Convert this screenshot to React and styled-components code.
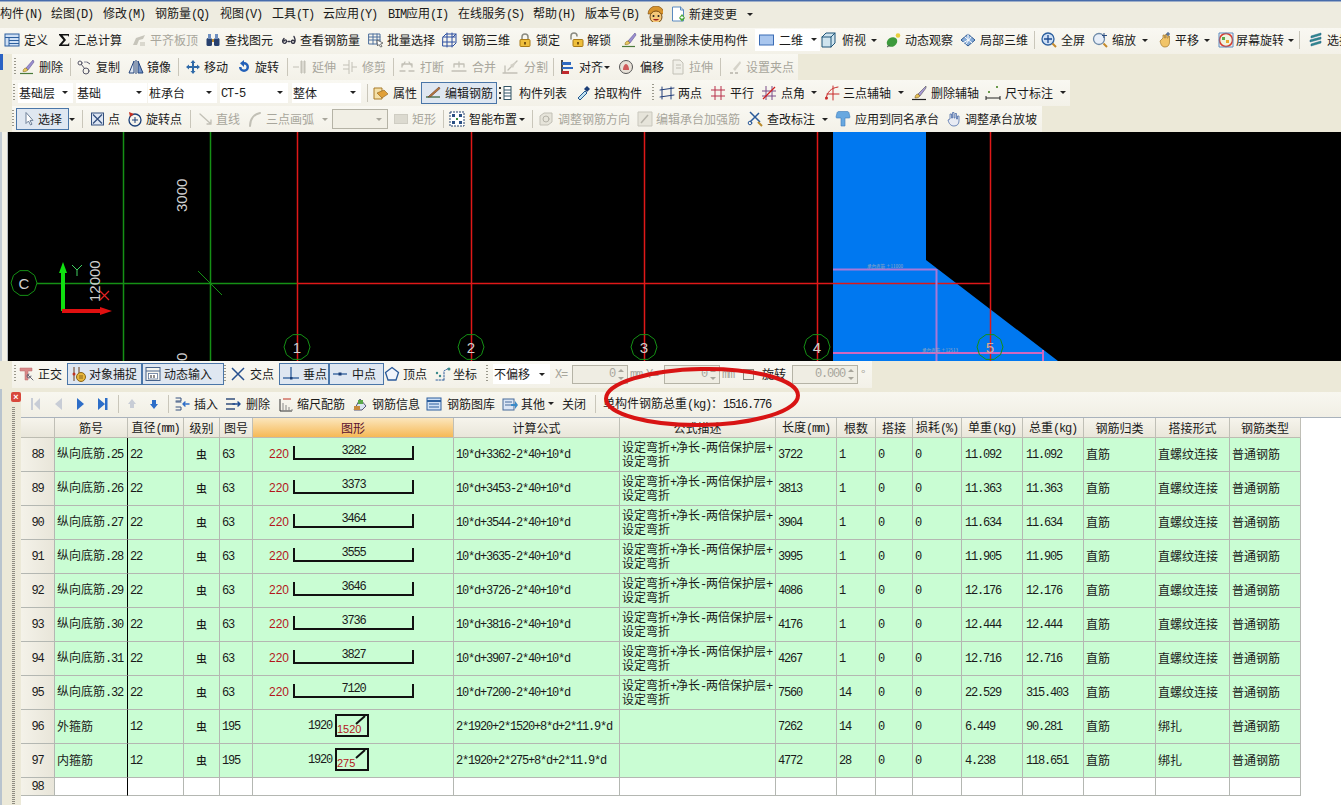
import React from 'react';
import styled, { createGlobalStyle } from 'styled-components';

const Global = createGlobalStyle`
  html, body { margin: 0; padding: 0; background: #ece9d8; overflow: hidden; }
  * { box-sizing: border-box; }
`;

const CJK = '"Noto Sans CJK SC", "Liberation Sans", sans-serif';
const MONO = '"Liberation Mono", "DejaVu Sans Mono", monospace';

const Page = styled.div`
  position: relative; width: 1341px; height: 805px; overflow: hidden;
  display: flex; flex-direction: column; background: #ece9d8;
  font-family: ${CJK}; font-size: 12px; line-height: 14px; color: #1a1a1a;
`;
const TopLine = styled.div`height: 2px; background: linear-gradient(#1c4a9c, #c8cfd8);`;
const MenuBar = styled.div`height: 26px; display: flex; align-items: center; padding-bottom: 2px; background: #eeece0;`;
const ToolRow = styled.div`
  height: 26px; display: flex; align-items: stretch;
`;
const Bar = styled.div`
  display: flex; align-items: center; flex: 0 0 auto; height: 26px;
  margin-left: ${p => p.$left}px; width: ${p => p.$width}px; padding-left: ${p => p.$pad}px;
  padding-bottom: ${p => p.$lift || 0}px;
  background: linear-gradient(#f9f8f2, #f3f1e8);
`;
const SideTab = styled.div`
  flex: 0 0 3px; width: 3px; height: 16px; background: #2a62c4; margin-right: -3px; position: relative;
`;
const Item = styled.div`
  flex: 0 0 ${p => p.$w}px; width: ${p => p.$w}px; height: ${p => (p.$active ? 22 : 18)}px;
  display: flex; align-items: center; white-space: nowrap;
  padding-left: ${p => p.$pad || 0}px; gap: ${p => p.$gap ?? 4}px;
  color: ${p => (p.$dis ? '#a8a69c' : '#1a1a1a')};
  ${p => p.$active && 'background: #dfe7f1; border: 1px solid #4a76a8; margin-right: 0;'}
`;
const Lat = styled.span`font-family: ${MONO}; font-size: 12px; letter-spacing: -1.2px;`;
const Sep = styled.div`
  flex: 0 0 ${p => p.$w}px; height: 18px; display: flex;
  &::before { content: ''; width: 1px; height: 18px; background: #c9c6ba; }
`;
const Grip = styled.div`
  flex: 0 0 ${p => p.$w}px; height: 18px; display: flex;
  &::before { content: ''; width: 2px; height: 18px;
    background-image: linear-gradient(#9a988c 50%, transparent 50%); background-size: 2px 3px; }
`;
const ArrowSlot = styled.div`
  flex: 0 0 ${p => p.$w}px; height: 18px; display: flex; align-items: center;
  &::before { content: ''; border-left: 3px solid transparent; border-right: 3px solid transparent;
    border-top: 3px solid ${p => (p.$dis ? '#a8a69c' : '#222')}; }
`;
const Slot = styled.div`flex: 0 0 ${p => p.$w}px; display: flex; align-items: center;`;
const SelectBox = styled.div`
  width: ${p => p.$w}px; height: 20px; background: #fff; display: flex; align-items: center;
  justify-content: space-between; padding: 0 5px 0 1px; white-space: nowrap; position: relative;
  ${p => p.$frame && 'border: 1px solid #b5b3a6; background: #f1efe5;'}
  &::after { content: ''; border-left: 3px solid transparent; border-right: 3px solid transparent;
    border-top: 3px solid ${p => (p.$frame ? '#a8a69c' : '#222')}; }
`;
const NumBox = styled.div`
  width: ${p => p.$w}px; height: 19px; border: 1px solid #b5b3a6; background: #efede3;
  display: flex; align-items: center; justify-content: flex-end; padding-right: 12px;
  color: #a8a69c; font-family: ${MONO}; font-size: 12px; letter-spacing: -1.2px; position: relative;
  &::before { content: ''; position: absolute; right: 3px; top: 3px; border-left: 3px solid transparent;
    border-right: 3px solid transparent; border-bottom: 3px solid #a8a69c; }
  &::after { content: ''; position: absolute; right: 3px; bottom: 3px; border-left: 3px solid transparent;
    border-right: 3px solid transparent; border-top: 3px solid #a8a69c; }
`;
const CheckBox = styled.div`width: 11px; height: 11px; border: 1px solid #8b8a80; background: #f3f1e8;`;
const WhiteBox = styled.div`
  flex: 0 0 ${p => p.$w}px; height: 22px; background: #fff; display: flex; align-items: center;
  padding-left: 3px; gap: 5px; white-space: nowrap; position: relative;
  &::after { content: ''; position: absolute; right: 3px; top: 9px; border-left: 3px solid transparent;
    border-right: 3px solid transparent; border-top: 3px solid #222; }
`;
const CanvasRow = styled.div`height: 229px; display: flex;`;
const LeftStrip = styled.div`
  flex: 0 0 8px; background: #f3f1e6; border-left: 2px solid #c3ccd4; border-right: 1px solid #b8bcc0;
`;
const Cad = styled.svg`flex: 1; display: block; background: #000;`;
const SnapRow = styled.div`height: 28px; display: flex;`;
const SnapBar = styled(Bar)`height: 27px;`;
const Lower = styled.div`flex: 1; display: flex; min-height: 0;`;
const Rail = styled.div`
  flex: 0 0 21px; display: flex; flex-direction: column; padding: 3px 0 0 10px; gap: 5px;
  border-left: 2px solid #b9c4ce; margin-left: 0; position: relative;
`;
const CloseBtn = styled.div`
  width: 10px; height: 10px; background: #d8483c; border-radius: 2px; color: #fff; margin-left: -1px;
  font: bold 9px/10px "Liberation Sans", sans-serif; text-align: center;
`;
const Dots = styled.div`
  flex: 1; width: 3px; margin-left: 0;
  background-image: linear-gradient(#8f8d82 50%, transparent 50%); background-size: 3px 2px;
`;
const Main = styled.div`flex: 1; display: flex; flex-direction: column; padding-top: 3px; min-width: 0; background: linear-gradient(#ece9d8 3px, #fff 3px);`;
const RebarBar = styled.div`
  height: 26px; flex: 0 0 26px; display: flex; align-items: center; padding-left: ${p => p.$pad}px; padding-bottom: 2px;
  background: linear-gradient(#f8f7f0, #f1efe5); border-bottom: 1px solid #a9b2bc;
`;
const Grid = styled.table`
  border-collapse: separate; border-spacing: 0; table-layout: fixed; width: 1280px; background: #fff;
`;
const Th = styled.th`
  height: 20px; padding: 0; font-weight: 400; font-size: 12px; text-align: center; white-space: nowrap;
  border-right: 1px solid #c0bfb6; border-bottom: 1px solid #bdbcb2;
  background: ${p => (p.$hot ? 'linear-gradient(#fbe6bd, #f6b956)' : 'linear-gradient(#f6f4ec, #e9e6da)')};
  color: ${p => (p.$hot ? '#5a1030' : '#1a1a1a')};
`;
const Td = styled.td`
  padding: 0 0 1px ${p => p.$pl ?? 2}px; height: ${p => (p.$blank ? 18 : 34)}px; font-size: 12px; line-height: 12px;
  white-space: nowrap; overflow: hidden; text-align: ${p => (p.$center ? 'center' : 'left')};
  background: ${p => (p.$blank ? '#fff' : '#c9fdd3')};
  border-right: 1px solid ${p => (p.$freeze ? '#000' : '#b4b7b2')};
  border-bottom: 1px solid #b4b7b2;
`;
const RowHead = styled(Td)`
  background: linear-gradient(90deg, #f4f2e9, #e8e5d9); padding: 0 0 1px; text-align: center;
`;
const GradeMark = styled.span`font-size: 11px; font-weight: 500;`;
const Shape = styled.div`display: flex; align-items: center; padding-left: ${p => p.$pl}px;`;
const RedLen = styled(Lat)`color: #b3161c; width: 24px; flex: 0 0 24px; font-family: "Liberation Sans", sans-serif; letter-spacing: 0;`;
const Bracket = styled.div`
  width: 121px; height: 14px; margin-bottom: 3px; border: 2px solid #111; border-top: 0;
  text-align: center; font-family: ${MONO}; font-size: 12px; letter-spacing: -1.2px; line-height: 11px;
`;
const Len = styled(Lat)`width: 27px; flex: 0 0 27px;`;
const Stirrup = styled.div`
  position: relative; width: 34px; height: 23px; border: 2px solid #111; color: #b3161c;
  font-family: "Liberation Sans", sans-serif; font-size: 11px; line-height: 10px; padding: 8px 0 0 0; margin-top: -1px;
`;
const Hook = styled.svg`position: absolute; right: -2px; top: -2px;`;
const Ellipse = styled.svg`position: absolute; left: 596px; top: 362px; pointer-events: none;`;

const S = { fill: 'none', strokeLinecap: 'round', strokeLinejoin: 'round' };
const ICONS = {
  def: <><rect x="1" y="2" width="14" height="12" fill="#cfe0f5" stroke="#2c5f9e" /><path d="M1 5.5h14M5 5.5V14M5 8.5h10M5 11.5h10" stroke="#2c5f9e" /></>,
  sigma: <path d="M3 2h10v3l-1-1.5H6.5L10 8l-4 4.5h6l1.2-2V14H3v-1l4.4-5L3 3z" fill="#111" />,
  alignG: <><path d="M2 13l3-7 9-3-2 4-4 1-2 5z" fill="#c7c5bb" /><path d="M9 10h5v4H9z" fill="#dad8ce" /></>,
  binoc: <><rect x="1.5" y="6" width="5.5" height="8" rx="1.5" fill="#27406e" /><rect x="9" y="6" width="5.5" height="8" rx="1.5" fill="#27406e" /><rect x="3" y="2" width="3" height="5" fill="#6e8fc0" /><rect x="10" y="2" width="3" height="5" fill="#6e8fc0" /><path d="M7 7h2v3H7z" fill="#b9882e" /></>,
  glasses: <path d="M3 6.5C1.5 8 1 10 2.5 11s3-.5 3-2-2-1.5-2.5 0M13 4.5c1 2 1.5 4.5.5 6s-3 1-3-.7 1.5-2 2.5-1M7 9.5h2" {...S} stroke="#334" strokeWidth="1.4" />,
  batch: <><path d="M1 2h11v10H1zM1 5h11M1 8h11M5 2v10M9 2v10" {...S} stroke="#4d6f9c" /><path d="M9 8l6 3-2.5 1 1.500 2.500-1.500.5-1.500-2.500L9.500 14z" fill="#fff" stroke="#444" strokeWidth=".7" /></>,
  grid3: <path d="M1 5h12M1 10h12M5 1v14M10 1v14M1 5l3-3h10v9l-3 3H1zM14 2l-3 3" {...S} stroke="#2c4fa0" />,
  lock: <><path d="M5 8V5a3 3 0 016 0v3" {...S} stroke="#8b8b80" strokeWidth="1.5" /><rect x="3" y="7.500" width="10" height="7" rx="1" fill="#efbf3c" stroke="#a97a16" /><rect x="7" y="10" width="2" height="2.500" fill="#7a5510" /></>,
  unlock: <><path d="M3 7V4a3 3 0 016 0" {...S} stroke="#8b8b80" strokeWidth="1.5" /><rect x="5" y="7.500" width="10" height="7" rx="1" fill="#efbf3c" stroke="#a97a16" /><rect x="9" y="10" width="2" height="2.500" fill="#7a5510" /></>,
  brush: <><path d="M14 1L7 9l2 2 6-8z" fill="#9b8fd0" stroke="#5e5596" strokeWidth=".6" /><path d="M7 9c-2 0-3 2-3 3.500 2 .5 4-.5 5-1.500z" fill="#e8c860" stroke="#8a6d20" strokeWidth=".6" /><path d="M1 14.500h13" stroke="#4a7a3a" strokeWidth="1.200" /></>,
  sq2d: <rect x="1.500" y="3" width="14" height="10" fill="#a9c6ee" stroke="#3b6cb5" />,
  cube: <><path d="M2 5l4-4h9v10l-4 4H2z" fill="#cfe4ee" stroke="#1f5578" /><path d="M2 5h9v10M11 5l4-4" {...S} stroke="#1f5578" /></>,
  orbit: <><ellipse cx="7" cy="10" rx="5.500" ry="4.500" fill="#3c9a3c" transform="rotate(-35 7 10)" /><circle cx="13" cy="3.500" r="2.300" fill="#e9cf3c" /><path d="M2 15l3-2" stroke="#555" /></>,
  local3: <><path d="M1 8l7-6 7 6-7 6z" fill="#87acd8" stroke="#2f5a92" /><path d="M5 5l7 6M8 2v6l-5 3M11 5L6 12" {...S} stroke="#fff" /></>,
  full: <><circle cx="7" cy="7" r="6" fill="#cfe0f5" stroke="#2c5f9e" strokeWidth="1.300" /><path d="M7 3v8M3 7h8" stroke="#1d4a90" strokeWidth="1.300" /><path d="M11.500 11.500L15 15" stroke="#c38a2c" strokeWidth="2" /></>,
  zoom: <><circle cx="7" cy="7" r="5.500" fill="#e7eef8" stroke="#6e8aa8" strokeWidth="1.300" /><path d="M11.500 11.500L15 15" stroke="#c38a2c" strokeWidth="2" /><path d="M12 1v5M10 3.500h5" stroke="#2a4c80" /></>,
  pan: <><path d="M4 9l3-3V3h1.500v3h1V2.500H11V6h1V4h1.500v6c0 3-1.500 5-4.500 5s-4-2-5-6z" fill="#f1c468" stroke="#a2772a" strokeWidth=".7" /><path d="M12 0v4M10 2h4" stroke="#2a4c80" /></>,
  spin: <><circle cx="8" cy="8" r="6.500" fill="#eef3e0" stroke="#d83a2c" strokeWidth="1.500" /><path d="M4 5h3v3H4z" fill="#5aa84a" /><path d="M8 8h3v3H8z" fill="#e8a830" /><path d="M1 1h14v14H1z" fill="none" stroke="#5d8ac0" /></>,
  layers: <path d="M3 4l10-3v2L3 6zM2 8l11-3v2L2 10zM3 12l10-3v2L3 14z" fill="#2f8a8a" stroke="#1a5f8a" strokeWidth=".5" />,
  scissors: <><circle cx="4" cy="4" r="2" {...S} stroke="#556" /><circle cx="10" cy="12" r="3" {...S} stroke="#556" /><path d="M11 3l3 2M5 5l4 5" stroke="#556" /><path d="M8 3h3" stroke="#889" /></>,
  mirror: <><path d="M1 14L6 2v12z" fill="#dfe7f1" stroke="#23427a" /><path d="M15 14L10 2v12z" fill="#7696c8" stroke="#23427a" /><path d="M8 1v14" stroke="#23427a" /></>,
  move: <path d="M8 1l2.500 3H9v3h3V5.500L15 8l-3 2.500V9H9v3h1.500L8 15l-2.500-3H7V9H4v1.500L1 8l3-2.500V7h3V4H5.500z" fill="#2f6aa8" />,
  rot: <path d="M8 3a5 5 0 11-5 5h2.500a2.500 2.500 0 102.500-2.500V8L4 4.200 8 1z" fill="#2360b8" />,
  extend: <path d="M1 8h6M9 2h1v12H9zM12 2h1v12h-1z" stroke="#c2c0b6" fill="#d0cec4" />,
  trim: <path d="M7 1v14M10 3v10M1 6h6M1 10h6M10 8h5" stroke="#c2c0b6" />,
  breakG: <path d="M1 12h5M10 12h5M3 5h10M3 5v3M13 5v3M6 3L4 6M10 3l2 3" {...S} stroke="#c2c0b6" strokeWidth="1.300" />,
  mergeG: <path d="M1 12h14M3 5h10M3 5v3M13 5v3M8 3v5" {...S} stroke="#c2c0b6" strokeWidth="1.300" />,
  splitG: <><path d="M1 14h14M3 14V7M15 2L6 11" {...S} stroke="#c2c0b6" strokeWidth="1.300" /><path d="M8 6l3 3 3-6z" fill="#d3d1c7" /></>,
  alignL: <><path d="M2 1v14" stroke="#111" strokeWidth="1.500" /><path d="M2 3h9v3H2z" fill="#2f6ac0" /><path d="M2 8h11v2H2z" fill="#2f6ac0" /><path d="M2 12h7v3H2z" fill="#c0282c" /></>,
  offset: <><circle cx="8" cy="8" r="6.500" fill="#e8e2d8" stroke="#555" /><path d="M5 11c0-4 2-6 3-6s3 2 3 6z" fill="#cf5a5a" /></>,
  stretchG: <><path d="M3 1h7l3 3v11H3z" fill="#f0efe8" stroke="#c2c0b6" /><path d="M6 6h5M6 9h5" stroke="#c2c0b6" /></>,
  gripG: <><path d="M3 14h3M8 14h3" stroke="#b5b3a9" strokeWidth="1.500" /><path d="M13 2L6 10l2 2 6-8z" fill="#d5d3c9" /></>,
  prop: <><path d="M1 3h8v11H1z" fill="#f4e0a8" stroke="#a97a26" /><path d="M4 8l7-3 4 4-6 4z" fill="#e0a038" stroke="#8a6020" strokeWidth=".6" /></>,
  pen: <><path d="M1 12h14" stroke="#2c5a30" strokeWidth="1.200" /><path d="M14 2L5 10l-2 2 3-.5 9-8z" fill="#b7793c" stroke="#6a3a2a" strokeWidth=".6" /></>,
  list: <><path d="M2 2h2v2H2zM2 7h2v2H2zM2 12h2v2H2z" fill="#333" /><rect x="7" y="1.500" width="7" height="13" fill="#fff" stroke="#356" /><path d="M7 5h7M7 8h7M7 11h7" stroke="#356" /></>,
  pick: <><path d="M3 13l7-7 2 2-7 7z" fill="#bfe0f0" stroke="#245a90" /><path d="M9 4l3-3 3 3-3 3z" fill="#1d3f78" /></>,
  twoPts: <path d="M3 2v12M12 2v12M1 5l14-2M1 12l14-2" {...S} stroke="#233f7a" />,
  para: <path d="M5 1v14M11 1v14M1 5h14M1 11h14" stroke="#b8304a" />,
  ptAngle: <><path d="M5 1v14M11 1v14M1 6h14M1 11h14" stroke="#7a4d88" /><path d="M2 14L14 2" stroke="#d02020" strokeWidth="1.300" /></>,
  three: <><path d="M2 14C3 7 7 3 14 2M9 1v14M3 9h12" {...S} stroke="#c82a2a" /><circle cx="2.500" cy="13" r="1.500" fill="#c82a2a" /></>,
  delAxis: <><path d="M1 14.500h14" stroke="#222" strokeWidth="1.200" /><path d="M15 1L7 9l2 2 6-8z" fill="#a99ad8" stroke="#555" strokeWidth=".6" /><path d="M7 9c-2 0-3 2-3 4 2 0 4-.5 5-2z" fill="#e6c25a" stroke="#7a5a20" strokeWidth=".6" /></>,
  dim: <><path d="M1 13h14M1 11v4M15 11v4" stroke="#222" /><path d="M3 6h2v2H3zM11 1h2v2h-2z" fill="#6a9a4a" /></>,
  cursor: <path d="M5 1.500v11l2.500-2.500 2 4 1.500-.8-2-3.800H12z" fill="#fff" stroke="#6e8098" />,
  pt: <><rect x="1.500" y="2" width="12" height="12" fill="#dfe7f4" stroke="#34507e" /><path d="M3 3.500l9 9M12 3.500l-9 9" stroke="#34507e" strokeWidth="1.300" /></>,
  rotPt: <><circle cx="8" cy="9" r="6" {...S} stroke="#1a3f78" strokeWidth="1.300" /><path d="M8 6v6M5 9h6" stroke="#1a3f78" /><path d="M2 1l5 2-4 3z" fill="#c83020" /></>,
  lineG: <path d="M2 3l11 10M13 13H9M13 13V9" {...S} stroke="#c2c0b6" strokeWidth="1.300" />,
  arcG: <path d="M3 15C3 8 7 3 13 2" {...S} stroke="#c2c0b6" strokeWidth="2" />,
  rectG: <rect x="1.500" y="3.500" width="13" height="9" fill="#dcdad0" stroke="#cfcdc3" />,
  smart: <><rect x="1" y="1" width="14" height="14" fill="#fff" stroke="#23406e" strokeDasharray="2 1" /><path d="M3 3h3v3H3zM10 3h3v3h-3zM3 10h3v3H3zM10 10h3v3h-3z" fill="#2a4f84" /><path d="M7 7h2v2H7z" fill="#3a8a3a" /></>,
  dirG: <><path d="M2 5l4-3h8v9l-4 3H2z" fill="#e6e4da" stroke="#c2c0b6" /><circle cx="8" cy="8" r="3" {...S} stroke="#b5b3a9" /></>,
  strG: <><path d="M1 1h14v14H1z" fill="#e6e4da" stroke="#c9c7bd" /><path d="M4 12L11 4" stroke="#b5b3a9" strokeWidth="1.500" /></>,
  editDim: <><path d="M3 1l10 10M12 2L3 11" stroke="#2b5a9a" strokeWidth="1.500" /><circle cx="3" cy="12" r="1.800" {...S} stroke="#2b5a9a" /><path d="M11 11l4 4" stroke="#b88a2c" strokeWidth="2" /></>,
  apply: <path d="M2 2c0-1 1-1.500 2-1.500h8c1 0 2 .5 2 1.500l1 4c0 1-1 1-1 1H10v8H6V7H2S1 7 1 6z" fill="#68a8e0" stroke="#3d7ab8" strokeWidth=".6" />,
  hand: <><path d="M3 9l2-1V3h1.500v4h1V1.500H9V7h1V2.500h1.500V8h1V5H14v5c0 3-2 5-5 5s-5-2-6-6z" fill="#e8ebf3" stroke="#3b5ea0" strokeWidth=".7" /></>,
  ortho: <><path d="M1 2h12v3H9v9H6V5H1z" fill="#d98888" stroke="#b86a6a" strokeWidth=".5" /><path d="M9 9l5 5M12 10a2 2 0 11-2-2" {...S} stroke="#667" /></>,
  snap: <><path d="M3 1v14M8 1v6" stroke="#6a3a1a" /><circle cx="3" cy="8" r="1.500" fill="#c03020" /><circle cx="10" cy="11" r="4.500" fill="#e8b83c" stroke="#8a6418" /><path d="M8 10h4M8 12h4" stroke="#8a6418" /></>,
  dynIn: <><rect x="1" y="1.500" width="14" height="13" fill="#f7f6ef" stroke="#46628a" /><path d="M1 5h14" stroke="#46628a" /><rect x="3.500" y="7.500" width="9" height="5.500" fill="#fff" stroke="#46628a" strokeWidth=".7" /><path d="M6 9v3M9 9v3" stroke="#222" /></>,
  cross: <path d="M2 2l12 12M14 2L2 14" stroke="#27508e" strokeWidth="1.500" />,
  perp: <><path d="M8 1v11" stroke="#2a5a9a" strokeWidth="1.300" /><path d="M0 12h16" stroke="#2a5a9a" strokeWidth="1.300" /><rect x="7" y="11" width="2.500" height="2.500" fill="#1a3f78" /></>,
  mid: <><path d="M1 8h14" stroke="#2a5a9a" strokeWidth="1.300" /><rect x="6.500" y="6.500" width="3" height="3" fill="#1a3f78" /></>,
  vertex: <path d="M8 1.500l6.500 5-2.500 7.500H4L1.500 6.500z" fill="#f1f5fb" stroke="#2a5a9a" strokeWidth="1.300" />,
  coord: <><path d="M1 14h8M9 14V5M9 5l5-3" {...S} stroke="#2a5a9a" strokeDasharray="1.500 1.500" /><circle cx="14" cy="3" r="1.500" fill="#3a8a8a" /><circle cx="2" cy="7" r="1.200" fill="#3a8a8a" /><circle cx="5" cy="10" r="1.200" fill="#3a8a8a" /></>,
  navFirst: <path d="M4 2h2v12H4zM13 2v12L7 8z" fill="#c8cdd6" />,
  navPrev: <path d="M12 2v12L5 8z" fill="#c8cdd6" />,
  navNext: <path d="M5 2v12l7-6z" fill="#2d6ec8" />,
  navLast: <path d="M3 2v12l7-6zM10 2h2.500v12H10z" fill="#2d6ec8" />,
  upG: <path d="M8 3l4 5H10v4H6V8H4z" fill="#c8cdd6" />,
  down: <path d="M8 13l-4-5h2V4h4v4h2z" fill="#2d6ec8" />,
  ins: <><path d="M2 2h5v3H2M2 6h5M2 11h5v3H2" {...S} stroke="#34507e" /><path d="M15 8H9M11 6L9 8l2 2" {...S} stroke="#2d6ec8" strokeWidth="1.500" /></>,
  del: <><path d="M1 3h9M1 8h9M1 13h9" stroke="#34507e" strokeWidth="1.300" /><path d="M8 8h7M13 6l2 2-2 2" {...S} stroke="#1d4a90" strokeWidth="1.500" /></>,
  scale: <><path d="M2 3v12M2 15h12" stroke="#333" /><path d="M5 15V7M8 15V9M11 15v-4M14 15v-2" stroke="#888" /><path d="M5 3h8" stroke="#c03020" /></>,
  info: <><path d="M2 14L8 3l6 7-4 4z" fill="#d9e4f0" stroke="#557" /><path d="M6 4h5v4H6z" fill="#5aa84a" /><path d="M2 10h6v4H2z" fill="#c88a3c" /></>,
  lib: <><rect x="1" y="2" width="14" height="12" fill="#cfe0f5" stroke="#2c5f9e" /><path d="M1 5h14" stroke="#2c5f9e" strokeWidth="2" /><path d="M3 8h10M3 11h10" stroke="#2c5f9e" /></>,
  other: <><rect x="1" y="3" width="11" height="11" fill="#dbe6f5" stroke="#466a9a" /><path d="M3 6h7M3 9h7" stroke="#466a9a" /><path d="M9 8h4V5l3 4-3 4v-3H9z" fill="#3a8ac8" /></>,
  face: <><path d="M1 8a8 8 0 0116 0z" fill="#d8942c" stroke="#7a4c10" strokeWidth=".6" /><circle cx="9" cy="11" r="6" fill="#f5c878" stroke="#7a4c10" /><circle cx="6.500" cy="10" r="1" fill="#222" /><circle cx="11.500" cy="10" r="1" fill="#222" /><path d="M6 13c1.500 2 4.500 2 6 0z" fill="#a02020" /></>,
  doc: <><path d="M1.500 1h8l3 3v11h-11z" fill="#fff" stroke="#5a8ac0" /><path d="M9.500 1v3h3" {...S} stroke="#5a8ac0" /><path d="M8 12l3-4 3 4-3 3.500z" fill="#48a838" /><path d="M11 10v3M9.500 11.500h3" stroke="#fff" /></>,
};

const Icon = ({ name, size = 16 }) => (
  <svg width={size} height={size} viewBox="0 0 16 16" style={{ flex: '0 0 auto', display: 'block' }}>{ICONS[name]}</svg>
);

const mix = text => String(text).split(/([\x00-\x7f]+)/).filter(Boolean).map((part, i) =>
  /^[\x00-\x7f]+$/.test(part) ? <Lat key={i}>{part}</Lat> : <React.Fragment key={i}>{part}</React.Fragment>);

const t = (x, icon, label, lx, o = {}) => ({ kind: 'tool', x, icon, label, lx, ...o });
const s = x => ({ kind: 'sep', x });
const g = x => ({ kind: 'grip', x });
const a = (x, dis) => ({ kind: 'arrow', x, dis });
const sel = (x, w, label, frame) => ({ kind: 'select', x, bw: w, label, frame });
const txt = (x, label, dis) => ({ kind: 'tool', x, label, lx: x, dis });
const num = (x, w, label) => ({ kind: 'num', x, bw: w, label });
const chk = x => ({ kind: 'check', x });
const wbox = (x, icon, label) => ({ kind: 'white', x, icon, label });

const Items = ({ items, end }) => items.map((it, i) => {
  const w = (items[i + 1] ? items[i + 1].x : end) - it.x;
  switch (it.kind) {
    case 'sep': return <Sep key={i} $w={w} />;
    case 'grip': return <Grip key={i} $w={w} />;
    case 'arrow': return <ArrowSlot key={i} $w={w} $dis={it.dis} />;
    case 'select': return <Slot key={i} $w={w}><SelectBox $w={it.bw} $frame={it.frame}><span>{mix(it.label)}</span></SelectBox></Slot>;
    case 'num': return <Slot key={i} $w={w}><NumBox $w={it.bw}>{it.label}</NumBox></Slot>;
    case 'check': return <Slot key={i} $w={w}><CheckBox /></Slot>;
    case 'white': return <WhiteBox key={i} $w={w}><Icon name={it.icon} /><span>{it.label}</span></WhiteBox>;
    default: {
      const pad = it.pad || 0;
      const gap = it.icon ? it.lx - it.x - 16 - pad : 0;
      return (
        <Item key={i} $w={w} $dis={it.dis} $active={it.active} $pad={it.active ? pad - 1 : pad} $gap={gap}>
          {it.icon && <Icon name={it.icon} />}
          <span>{mix(it.label)}</span>
        </Item>
      );
    }
  }
});

const MENU = [
  t(1, null, '构件(N)', 1), t(52, null, '绘图(D)', 52), t(104, null, '修改(M)', 104), t(156, null, '钢筋量(Q)', 156),
  t(221, null, '视图(V)', 221), t(273, null, '工具(T)', 273), t(324, null, '云应用(Y)', 324), t(389, null, 'BIM应用(I)', 389),
  t(459, null, '在线服务(S)', 459), t(534, null, '帮助(H)', 534), t(586, null, '版本号(B)', 586),
  t(648, 'face', '', 664), t(672, 'doc', '新建变更', 690), a(748),
];
const R1 = [
  t(4, 'def', '定义', 24), t(56, 'sigma', '汇总计算', 74), t(131, 'alignG', '平齐板顶', 150, { dis: true }),
  t(205, 'binoc', '查找图元', 225), t(281, 'glasses', '查看钢筋量', 300), t(368, 'batch', '批量选择', 387),
  t(442, 'grid3', '钢筋三维', 462), t(517, 'lock', '锁定', 536), t(568, 'unlock', '解锁', 587),
  t(621, 'brush', '批量删除未使用构件', 640), wbox(755, 'sq2d', '二维'), t(820, 'cube', '俯视', 842), a(871),
  t(885, 'orbit', '动态观察', 905), t(960, 'local3', '局部三维', 980), s(1034), t(1041, 'full', '全屏', 1061),
  t(1092, 'zoom', '缩放', 1112), a(1142), t(1156, 'pan', '平移', 1175), a(1204), t(1218, 'spin', '屏幕旋转', 1236), a(1288),
  s(1299), t(1308, 'layers', '选择', 1327),
];
const R2 = [
  g(14), t(19, 'brush', '删除', 39), s(70), t(76, 'scissors', '复制', 96), t(128, 'mirror', '镜像', 147), s(178),
  t(185, 'move', '移动', 204), t(236, 'rot', '旋转', 255), s(287), t(292, 'extend', '延伸', 312, { dis: true }),
  t(342, 'trim', '修剪', 362, { dis: true }), s(393), t(399, 'breakG', '打断', 420, { dis: true }),
  t(451, 'mergeG', '合并', 472, { dis: true }), t(502, 'splitG', '分割', 524, { dis: true }), s(553),
  t(560, 'alignL', '对齐', 579), a(604), t(618, 'offset', '偏移', 640), t(670, 'stretchG', '拉伸', 689, { dis: true }),
  s(720), t(727, 'gripG', '设置夹点', 746, { dis: true }),
];
const R3 = [
  g(13), sel(18, 55, '基础层'), sel(76, 71, '基础'), sel(148, 69, '桩承台'), sel(220, 68, 'CT-5'), sel(292, 69, '整体'),
  s(367), t(373, 'prop', '属性', 393), t(421, 'pen', '编辑钢筋', 445, { active: true, pad: 4 }),
  t(497, 'list', '构件列表', 519), t(575, 'pick', '拾取构件', 594), g(652), t(659, 'twoPts', '两点', 678),
  t(710, 'para', '平行', 730), t(761, 'ptAngle', '点角', 781), a(811), t(824, 'three', '三点辅轴', 843), a(898),
  t(911, 'delAxis', '删除辅轴', 931), t(985, 'dim', '尺寸标注', 1005), a(1060),
];
const R4 = [
  g(12), t(16, 'cursor', '选择', 38, { active: true, pad: 5 }), a(69), s(82), t(90, 'pt', '点', 108), t(127, 'rotPt', '旋转点', 146), s(190),
  t(198, 'lineG', '直线', 216, { dis: true }), t(247, 'arcG', '三点画弧', 266, { dis: true }), a(322, true),
  sel(332, 56, '', true), t(393, 'rectG', '矩形', 412, { dis: true }), s(443), t(449, 'smart', '智能布置', 469), a(519), s(532),
  t(538, 'dirG', '调整钢筋方向', 558, { dis: true }), t(637, 'strG', '编辑承台加强筋', 656, { dis: true }),
  t(747, 'editDim', '查改标注', 767), a(822), t(835, 'apply', '应用到同名承台', 855), t(945, 'hand', '调整承台放坡', 965),
];
const SNAP = [
  g(14), t(19, 'ortho', '正交', 38), t(67, 'snap', '对象捕捉', 89, { active: true, pad: 4 }), t(142, 'dynIn', '动态输入', 164, { active: true, pad: 3 }),
  g(224), t(230, 'cross', '交点', 250), t(279, 'perp', '垂点', 303, { active: true, pad: 4 }), t(329, 'mid', '中点', 352, { active: true, pad: 3 }),
  t(384, 'vertex', '顶点', 403), t(435, 'coord', '坐标', 453), g(486), sel(493, 57, '不偏移'), txt(555, 'X=', true), num(572, 56, '0'),
  txt(630, 'mm', true), txt(646, 'Y=', true), num(664, 56, '0'), txt(722, 'mm', true), chk(743), txt(762, '旋转'), num(792, 66, '0.000'), txt(861, '°', true),
];
const REBAR = [
  t(27, 'navFirst', '', 43), t(50, 'navPrev', '', 66), t(72, 'navNext', '', 88), t(95, 'navLast', '', 111), s(118),
  t(124, 'upG', '', 140), t(146, 'down', '', 162), s(168), t(174, 'ins', '插入', 194), t(225, 'del', '删除', 246),
  t(278, 'scale', '缩尺配筋', 297), t(352, 'info', '钢筋信息', 372), t(426, 'lib', '钢筋图库', 447), t(502, 'other', '其他', 521), a(548),
  txt(562, '关闭'), s(595), txt(603, '单构件钢筋总重(kg)：1516.776'),
];

const COLS = [
  ['', 34], ['筋号', 73], ['直径(mm)', 56], ['级别', 36], ['图号', 33], ['图形', 201], ['计算公式', 166], ['公式描述', 156],
  ['长度(mm)', 61], ['根数', 39], ['搭接', 37], ['损耗(%)', 49], ['单重(kg)', 61], ['总重(kg)', 61], ['钢筋归类', 72], ['搭接形式', 74], ['钢筋类型', 71],
];
const DESC = ['设定弯折+净长-两倍保护层+', '设定弯折'];
const bar = (no, seq, len, mid, full, count, unit, total) => ({
  no, name: `纵向底筋.${seq}`, dia: 22, fig: 63, len, formula: `10*d+${mid}-2*40+10*d`, full, count, unit, total, lap: '直螺纹连接',
});
const ROWS = [
  bar(88, 25, 3282, 3362, 3722, 1, '11.092', '11.092'),
  bar(89, 26, 3373, 3453, 3813, 1, '11.363', '11.363'),
  bar(90, 27, 3464, 3544, 3904, 1, '11.634', '11.634'),
  bar(91, 28, 3555, 3635, 3995, 1, '11.905', '11.905'),
  bar(92, 29, 3646, 3726, 4086, 1, '12.176', '12.176'),
  bar(93, 30, 3736, 3816, 4176, 1, '12.444', '12.444'),
  bar(94, 31, 3827, 3907, 4267, 1, '12.716', '12.716'),
  bar(95, 32, 7120, 7200, 7560, 14, '22.529', '315.403'),
  { no: 96, name: '外箍筋', dia: 12, fig: 195, box: 1520, formula: '2*1920+2*1520+8*d+2*11.9*d', full: 7262, count: 14, unit: '6.449', total: '90.281', lap: '绑扎' },
  { no: 97, name: '内箍筋', dia: 12, fig: 195, box: 275, formula: '2*1920+2*275+8*d+2*11.9*d', full: 4772, count: 28, unit: '4.238', total: '118.651', lap: '绑扎' },
];

const Axis = ({ x, y, label, side = 13 }) => {
  const pts = Array.from({ length: 10 }, (_, i) => {
    const r = (i / 10) * Math.PI * 2;
    return `${x + side * Math.cos(r)},${y + side * Math.sin(r)}`;
  }).join(' ');
  return (
    <g>
      <polygon points={pts} fill="none" stroke="#159015" />
      <text x={x} y={y + 6} textAnchor="middle" fill={label === '5' ? '#d8a890' : '#d0d0d0'} fontFamily="Liberation Sans" fontSize="15">{label}</text>
    </g>
  );
};

const CadView = () => (
  <Cad viewBox="8 132 1333 229" width="1333" height="229">
    <polygon points="833,132 926,132 926,260 1058,361 833,361" fill="#0078f0" />
    <path d="M123.500 132V361M210.500 132V361M37 283.500H297" stroke="#159015" strokeWidth="1.500" />
    <path d="M198 271L222 295" stroke="#159015" />
    <path d="M297.500 132V361M471.500 132V361M644.500 132V361M817.500 132V361M990.500 132V361M297 283.500H990" stroke="#e01818" strokeWidth="1.500" />
    <path d="M833 269.500H936M936.500 269V361" stroke="#a878d8" strokeWidth="2" />
    <path d="M833 353H1044M1043 350V361" stroke="#d068c0" strokeWidth="2" />
    <text x="867" y="268" fill="#9aa8c0" fontSize="4.500" fontFamily={CJK}>承台底筋 ±11000</text>
    <text x="922" y="352" fill="#9aa8c0" fontSize="4.500" fontFamily={CJK}>承台底筋 ±12513</text>
    <Axis x={24} y={283} label="C" />
    <Axis x={297} y={347} label="1" />
    <Axis x={471} y={347} label="2" />
    <Axis x={644} y={347} label="3" />
    <Axis x={817} y={347} label="4" />
    <Axis x={990} y={347} label="5" />
    <g fill="#d0d0d0" fontFamily="Liberation Sans" fontSize="15">
      <text transform="translate(187 212) rotate(-90)">3000</text>
      <text transform="translate(100 302) rotate(-90)">12000</text>
      <text transform="translate(187 361) rotate(-90)">0</text>
    </g>
    <path d="M63 311V272" stroke="#10e010" strokeWidth="4" />
    <path d="M63 262l-4 11h8z" fill="#10e010" />
    <path d="M62 311H102" stroke="#e01010" strokeWidth="4" />
    <path d="M112 311l-12-4v8z" fill="#e01010" />
    <path d="M72 265l5 5 5-5M77 270v6" fill="none" stroke="#40d060" />
    <path d="M100 291l9 9M109 291l-9 9" stroke="#e02020" strokeWidth="1.300" />
  </Cad>
);

const Figure = ({ row }) => row.box ? (
  <Shape $pl={55}>
    <Len>1920</Len>
    <Stirrup>
      {row.box}
      <Hook width="34" height="23" viewBox="0 0 34 23"><path d="M21 10L30 2M27 1L34 1M33 1L33 9" stroke="#111" strokeWidth="2" fill="none" /></Hook>
    </Stirrup>
  </Shape>
) : (
  <Shape $pl={16}>
    <RedLen>220</RedLen>
    <Bracket>{row.len}</Bracket>
  </Shape>
);

const App = () => (
  <Page>
    <Global />
    <TopLine />
    <MenuBar><Items items={MENU} end={770} /></MenuBar>
    <ToolRow><Bar $left={0} $width={1341} $pad={4} $lift={2}><Items items={R1} end={1360} /></Bar></ToolRow>
    <ToolRow><SideTab /><Bar $left={12} $width={786} $pad={2}><Items items={R2} end={798} /></Bar></ToolRow>
    <ToolRow><Bar $left={12} $width={1058} $pad={1} $lift={1}><Items items={R3} end={1070} /></Bar></ToolRow>
    <ToolRow><Bar $left={12} $width={1030} $pad={0}><Items items={R4} end={1042} /></Bar></ToolRow>
    <CanvasRow><LeftStrip /><CadView /></CanvasRow>
    <SnapRow><SnapBar $left={12} $width={860} $pad={2} $lift={1}><Items items={SNAP} end={872} /></SnapBar></SnapRow>
    <Lower>
      <Rail><CloseBtn>×</CloseBtn><Dots /></Rail>
      <Main>
        <RebarBar $pad={6}><Items items={REBAR} end={780} /></RebarBar>
        <Grid>
          <colgroup>{COLS.map(([, w], i) => <col key={i} width={w} />)}</colgroup>
          <thead>
            <tr>{COLS.map(([h], i) => <Th key={i} $hot={h === '图形'}>{mix(h)}</Th>)}</tr>
          </thead>
          <tbody>
            {ROWS.map(r => (
              <tr key={r.no}>
                <RowHead><Lat>{r.no}</Lat></RowHead>
                <Td $freeze>{mix(r.name)}</Td>
                <Td><Lat>{r.dia}</Lat></Td>
                <Td $center $pl={0}><GradeMark>虫</GradeMark></Td>
                <Td><Lat>{r.fig}</Lat></Td>
                <Td $pl={0}><Figure row={r} /></Td>
                <Td><Lat>{r.formula}</Lat></Td>
                <Td>{!r.box && <>{mix(DESC[0])}<br />{DESC[1]}</>}</Td>
                <Td><Lat>{r.full}</Lat></Td>
                <Td><Lat>{r.count}</Lat></Td>
                <Td><Lat>0</Lat></Td>
                <Td><Lat>0</Lat></Td>
                <Td $pl={3}><Lat>{r.unit}</Lat></Td>
                <Td $pl={3}><Lat>{r.total}</Lat></Td>
                <Td>直筋</Td>
                <Td>{r.lap}</Td>
                <Td>普通钢筋</Td>
              </tr>
            ))}
            <tr>
              <RowHead $blank><Lat>98</Lat></RowHead>
              {COLS.slice(1).map(([h], i) => <Td key={h} $blank $freeze={i === 0} />)}
            </tr>
          </tbody>
        </Grid>
      </Main>
    </Lower>
    <Ellipse width="212" height="72" viewBox="0 0 212 72">
      <ellipse cx="106" cy="35" rx="96" ry="28" fill="none" stroke="#d81414" strokeWidth="4" transform="rotate(-1 106 35)" />
    </Ellipse>
  </Page>
);

export default App;
